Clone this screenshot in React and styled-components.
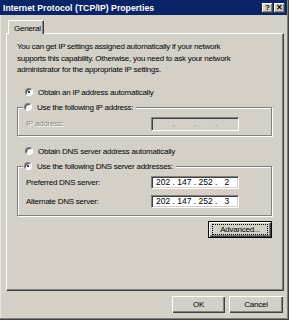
import styled, { createGlobalStyle } from 'styled-components'

const Global = createGlobalStyle`
  html, body {
    margin: 0;
    padding: 0;
    background: #d4d0c8;
  }
  * {
    box-sizing: border-box;
  }
`

const Window = styled.div`
  width: 289px;
  height: 320px;
  display: flex;
  flex-direction: column;
  background: #d4d0c8;
  font-family: "Liberation Sans", Arial, sans-serif;
  font-size: 8px;
  letter-spacing: -0.25px;
  color: #000;
  box-shadow: inset -1px -1px 0 #404040, inset -2px -2px 0 #808080,
    inset 1px 0 0 #e8e6e0;
  overflow: hidden;
`

const TitleBar = styled.div`
  height: 15px;
  margin-right: 2px;
  display: flex;
  align-items: center;
  justify-content: space-between;
  padding: 0 2px 0 3px;
  background: #0b2466;
  color: #fff;
  font-weight: bold;
  font-size: 8.7px;
  letter-spacing: 0;
`

const TitleButtons = styled.div`
  display: flex;
  gap: 1px;
`

const TitleButton = styled.span`
  width: 11px;
  height: 10px;
  display: flex;
  align-items: center;
  justify-content: center;
  background: #d4d0c8;
  color: #000;
  font-size: 8px;
  font-weight: bold;
  line-height: 1;
  box-shadow: inset -1px -1px 0 #404040, inset 1px 1px 0 #fff,
    inset -2px -2px 0 #808080;
`

const Content = styled.div`
  flex: 1;
  display: flex;
  flex-direction: column;
  padding: 5px 5px 7px 6px;
`

const TabStrip = styled.div`
  display: flex;
  padding-left: 2px;
  height: 13px;
`

const Tab = styled.div`
  width: 36px;
  height: 14px;
  padding: 3px 0 0 5px;
  background: #d4d0c8;
  border-left: 1px solid #fff;
  border-top: 1px solid #fff;
  border-right: 1px solid #404040;
  box-shadow: inset -1px 0 0 #808080;
  border-radius: 1px 1px 0 0;
  position: relative;
  z-index: 1;
`

const Panel = styled.div`
  flex: 1;
  display: flex;
  flex-direction: column;
  padding: 7px 11px 0 10px;
  border-left: 1px solid #fff;
  border-top: 1px solid #fff;
  border-right: 1px solid #404040;
  border-bottom: 1px solid #404040;
  box-shadow: inset -1px -1px 0 #808080;
`

const Intro = styled.p`
  margin: 0;
  width: 222px;
  line-height: 11.5px;
`

const Option = styled.label`
  display: flex;
  align-items: center;
  gap: 5px;
  height: 11px;
  margin: ${p => p.$top || 0}px 0 0 8px;
  white-space: nowrap;
`

const Radio = styled.span`
  width: 8px;
  height: 8px;
  flex: none;
  border-radius: 50%;
  background: #fff;
  border: 1px solid;
  border-color: #808080 #fff #fff #808080;
  box-shadow: inset 1px 1px 0 #404040;
  display: flex;
  align-items: center;
  justify-content: center;
  &::after {
    content: '';
    width: 2px;
    height: 2px;
    border-radius: 50%;
    background: ${p => (p.$checked ? '#000' : 'transparent')};
  }
`

const Group = styled.fieldset`
  margin: 4px 0 0;
  padding: 0 6px ${p => p.$bottom}px 8px;
  min-width: 0;
  border: 1px solid #808080;
  box-shadow: 1px 1px 0 #fff, inset 1px 1px 0 #fff;
  display: flex;
  flex-direction: column;
  gap: ${p => p.$gap || 0}px;
`

const Legend = styled.legend`
  padding: 0 3px 0 1px;
  margin-left: -3px;
  display: flex;
  align-items: center;
  gap: 5px;
  height: 11px;
  background: #d4d0c8;
`

const Field = styled.div`
  display: grid;
  grid-template-columns: 125px 88px;
  align-items: center;
  margin-top: ${p => p.$top || 0}px;
`

const FieldLabel = styled.span`
  color: ${p => (p.$disabled ? '#8e8c86' : '#000')};
  text-shadow: ${p => (p.$disabled ? '1px 1px 0 #fff' : 'none')};
`

const IpBox = styled.div`
  height: ${p => p.$h}px;
  display: grid;
  grid-template-columns: 1fr 3px 1fr 3px 1fr 3px 1fr;
  align-items: center;
  padding: 0 2px;
  background: ${p => (p.$disabled ? '#d4d0c8' : '#fff')};
  color: ${p => (p.$disabled ? '#808080' : '#000')};
  border: 1px solid;
  border-color: #808080 #fff #fff #808080;
  box-shadow: inset 1px 1px 0 #404040, inset -1px -1px 0 #d4d0c8;
  font-size: 8.5px;
  letter-spacing: 0;
  line-height: 1;
`

const Octet = styled.span`
  text-align: center;
`

const Dot = styled.span`
  text-align: center;
`

const ButtonRow = styled.div`
  display: flex;
  justify-content: flex-end;
  gap: 4px;
  margin-top: ${p => p.$top}px;
  margin-right: ${p => p.$right || 0}px;
`

const Button = styled.button`
  width: ${p => p.$w}px;
  height: 17px;
  padding: 0;
  font-family: inherit;
  font-size: 8px;
  letter-spacing: -0.25px;
  color: #000;
  background: #d4d0c8;
  border: ${p => (p.$default ? '1px solid #000' : 'none')};
  box-shadow: inset 1px 1px 0 #fff, inset -1px -1px 0 #404040,
    inset -2px -2px 0 #808080;
  display: flex;
  align-items: center;
  justify-content: center;
`

const FocusRing = styled.span`
  flex: 1;
  margin: 0 3px;
  height: 11px;
  border: 1px dotted #000;
  display: flex;
  align-items: center;
  justify-content: center;
`

function IpField({ parts, disabled, h }) {
  const cells = []
  ;[0, 1, 2, 3].forEach(i => {
    cells.push(<Octet key={'o' + i}>{parts ? parts[i] : ''}</Octet>)
    if (i < 3) cells.push(<Dot key={'d' + i}>.</Dot>)
  })
  return (
    <IpBox $disabled={disabled} $h={h}>
      {cells}
    </IpBox>
  )
}

export default function App() {
  return (
    <Window>
      <Global />
      <TitleBar>
        <span>Internet Protocol (TCP/IP) Properties</span>
        <TitleButtons>
          <TitleButton>?</TitleButton>
          <TitleButton>✕</TitleButton>
        </TitleButtons>
      </TitleBar>
      <Content>
        <TabStrip>
          <Tab>General</Tab>
        </TabStrip>
        <Panel>
          <Intro>
            You can get IP settings assigned automatically if your network
            supports this capability. Otherwise, you need to ask your network
            administrator for the appropriate IP settings.
          </Intro>

          <Option $top={11}>
            <Radio $checked />
            Obtain an IP address automatically
          </Option>

          <Group $bottom={4}>
            <Legend>
              <Radio />
              Use the following IP address:
            </Legend>
            <Field $top={4}>
              <FieldLabel $disabled>IP address:</FieldLabel>
              <IpField disabled h={14} />
            </Field>
          </Group>

          <Option $top={10}>
            <Radio />
            Obtain DNS server address automatically
          </Option>

          <Group $bottom={7} $gap={6}>
            <Legend>
              <Radio $checked />
              Use the following DNS server addresses:
            </Legend>
            <Field $top={4}>
              <FieldLabel>Preferred DNS server:</FieldLabel>
              <IpField parts={['202', '147', '252', '2']} h={13} />
            </Field>
            <Field>
              <FieldLabel>Alternate DNS server:</FieldLabel>
              <IpField parts={['202', '147', '252', '3']} h={13} />
            </Field>
          </Group>

          <ButtonRow $top={5}>
            <Button $w={64} $default>
              <FocusRing>Advanced...</FocusRing>
            </Button>
          </ButtonRow>
        </Panel>
        <ButtonRow $top={5} $right={1}>
          <Button $w={53}>OK</Button>
          <Button $w={54}>Cancel</Button>
        </ButtonRow>
      </Content>
    </Window>
  )
}
